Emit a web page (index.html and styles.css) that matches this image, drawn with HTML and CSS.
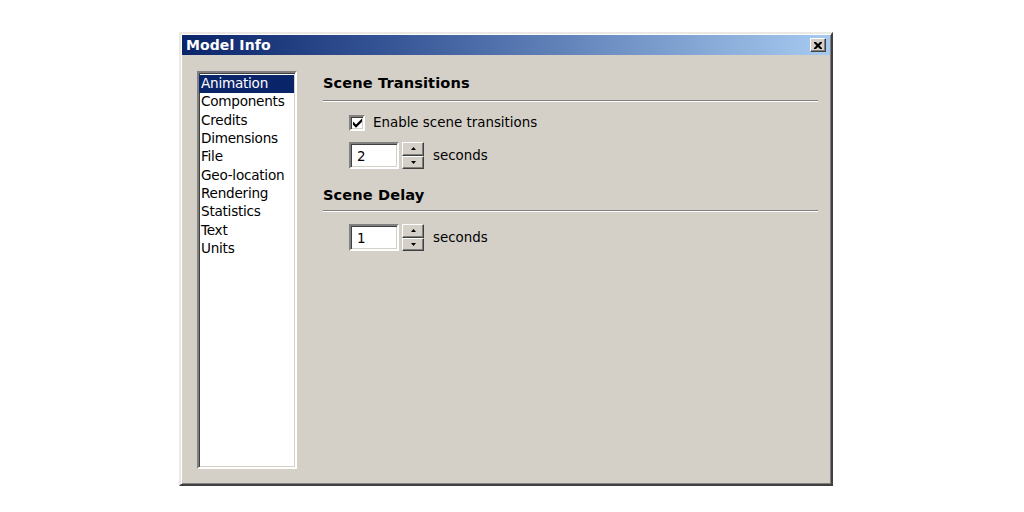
FILE: index.html
```html
<!DOCTYPE html>
<html>
<head>
<meta charset="utf-8">
<link rel="stylesheet" href="styles.css">
</head>
<body>
<div class="window">
  <div class="titlebar">
    <span class="title">Model Info</span>
    <button class="close" aria-label="Close">
      <svg width="8" height="7" viewBox="0 0 8 7"><path d="M0 0h2l2 2 2-2h2v1l-2.5 2.5L8 6v1H6L4 5 2 7H0V6l2.5-2.5L0 1z" fill="#000"/></svg>
    </button>
  </div>
  <div class="content">
    <ul class="list">
      <li class="selected">Animation</li>
      <li>Components</li>
      <li>Credits</li>
      <li>Dimensions</li>
      <li>File</li>
      <li>Geo-location</li>
      <li>Rendering</li>
      <li>Statistics</li>
      <li>Text</li>
      <li>Units</li>
    </ul>
    <div class="panel">
      <h2 class="heading">Scene Transitions</h2>
      <div class="sep"></div>
      <div class="group">
        <label class="check-row">
          <span class="checkbox">
            <svg width="11" height="11" viewBox="0 0 11 11"><path d="M1 4.5l3 3 6-6v3.2l-6 6-3-3z" fill="#000"/></svg>
          </span>
          <span>Enable scene transitions</span>
        </label>
        <div class="spin-row">
          <span class="field">2</span>
          <span class="spin">
            <span class="spin-btn"><svg width="5" height="3" viewBox="0 0 5 3"><path d="M2.5 0L5 3H0z" fill="#000"/></svg></span>
            <span class="spin-btn"><svg width="5" height="3" viewBox="0 0 5 3"><path d="M0 0h5L2.5 3z" fill="#000"/></svg></span>
          </span>
          <span class="unit">seconds</span>
        </div>
      </div>
      <h2 class="heading second">Scene Delay</h2>
      <div class="sep second-sep"></div>
      <div class="group">
        <div class="spin-row first">
          <span class="field">1</span>
          <span class="spin">
            <span class="spin-btn"><svg width="5" height="3" viewBox="0 0 5 3"><path d="M2.5 0L5 3H0z" fill="#000"/></svg></span>
            <span class="spin-btn"><svg width="5" height="3" viewBox="0 0 5 3"><path d="M0 0h5L2.5 3z" fill="#000"/></svg></span>
          </span>
          <span class="unit">seconds</span>
        </div>
      </div>
    </div>
  </div>
</div>
</body>
</html>
```

FILE: styles.css
```css
* { box-sizing: border-box; }
html, body { margin: 0; padding: 0; background: #fff; }
body {
  font-family: "DejaVu Sans", Verdana, sans-serif;
  font-size: 13.4px;
  color: #000;
  padding: 32px 0 0 179px;
}
.window {
  width: 654px;
  height: 454px;
  background: #d4d0c8;
  border-style: solid;
  border-width: 2px;
  border-color: #ece9e4 #404040 #404040 #ece9e4;
  box-shadow: inset 1px 1px 0 #fff, inset -1px -1px 0 #808080;
  padding: 1px;
  display: flex;
  flex-direction: column;
}
.titlebar {
  height: 20px;
  background: linear-gradient(to right, #0a246a 0%, #3a5a9a 35%, #a6caf0 100%);
  display: flex;
  align-items: center;
  justify-content: space-between;
  padding: 0 4px 0 4px;
}
.title {
  color: #fff;
  font-weight: bold;
  font-size: 14px;
  letter-spacing: 0.1px;
}
.close {
  width: 16px;
  height: 14px;
  padding: 0;
  margin: 0;
  background: #d4d0c8;
  border: 1px solid;
  border-color: #fff #404040 #404040 #fff;
  box-shadow: inset -1px -1px 0 #808080;
  display: flex;
  align-items: center;
  justify-content: center;
}
.content {
  flex: 1;
  display: flex;
  padding: 16px 0 0 15px;
}
.list {
  list-style: none;
  margin: 0;
  padding: 2px 0 0 0;
  width: 100px;
  height: 398px;
  background: #fff;
  border: 2px solid;
  border-color: #808080 #fff #fff #808080;
  box-shadow: inset 1px 1px 0 #404040, inset -1px -1px 0 #d4d0c8;
}
.list li {
  height: 18.33px;
  line-height: 17px;
  padding-left: 2px;
  margin-right: 1px;
  white-space: nowrap;
  font-size: 13.6px;
  letter-spacing: -0.25px;
}
.list li.selected {
  background: #0a246a;
  color: #fff;
}
.panel {
  margin-left: 26px;
  width: 495px;
  padding-top: 4px;
}
.heading {
  margin: 0;
  font-size: 14.6px;
  font-weight: bold;
  line-height: 16px;
  letter-spacing: 0.1px;
  color: #000;
}
.heading.second { margin-top: 18px; }
.sep {
  margin-top: 9px;
  height: 2px;
  border-top: 1px solid #808080;
  border-bottom: 1px solid #fff;
}
.sep.second-sep { margin-top: 7px; }
.group {
  padding-left: 26px;
}
.check-row {
  display: flex;
  align-items: center;
  gap: 8px;
  margin-top: 12px;
  height: 17px;
}
.checkbox {
  width: 16px;
  height: 16px;
  background: #fff;
  border: 2px solid;
  border-color: #808080 #fff #fff #808080;
  box-shadow: inset 1px 1px 0 #404040, inset -1px -1px 0 #d4d0c8;
  display: flex;
  align-items: center;
  justify-content: center;
}
.spin-row {
  display: flex;
  align-items: center;
  margin-top: 11px;
  height: 27px;
}
.spin-row.first { margin-top: 12px; }
.field {
  width: 50px;
  height: 27px;
  background: #fff;
  border: 2px solid;
  border-color: #808080 #fff #fff #808080;
  box-shadow: inset 1px 1px 0 #404040, inset -1px -1px 0 #d4d0c8;
  padding: 4px 0 0 6px;
  line-height: 18px;
}
.spin {
  margin-left: 3px;
  width: 22px;
  height: 27px;
  display: flex;
  flex-direction: column;
}
.spin-btn {
  flex: 1;
  background: #d4d0c8;
  border: 1px solid;
  border-color: #fff #404040 #404040 #fff;
  box-shadow: inset -1px -1px 0 #808080;
  display: flex;
  align-items: center;
  justify-content: center;
}
.unit {
  margin-left: 9px;
}
```
